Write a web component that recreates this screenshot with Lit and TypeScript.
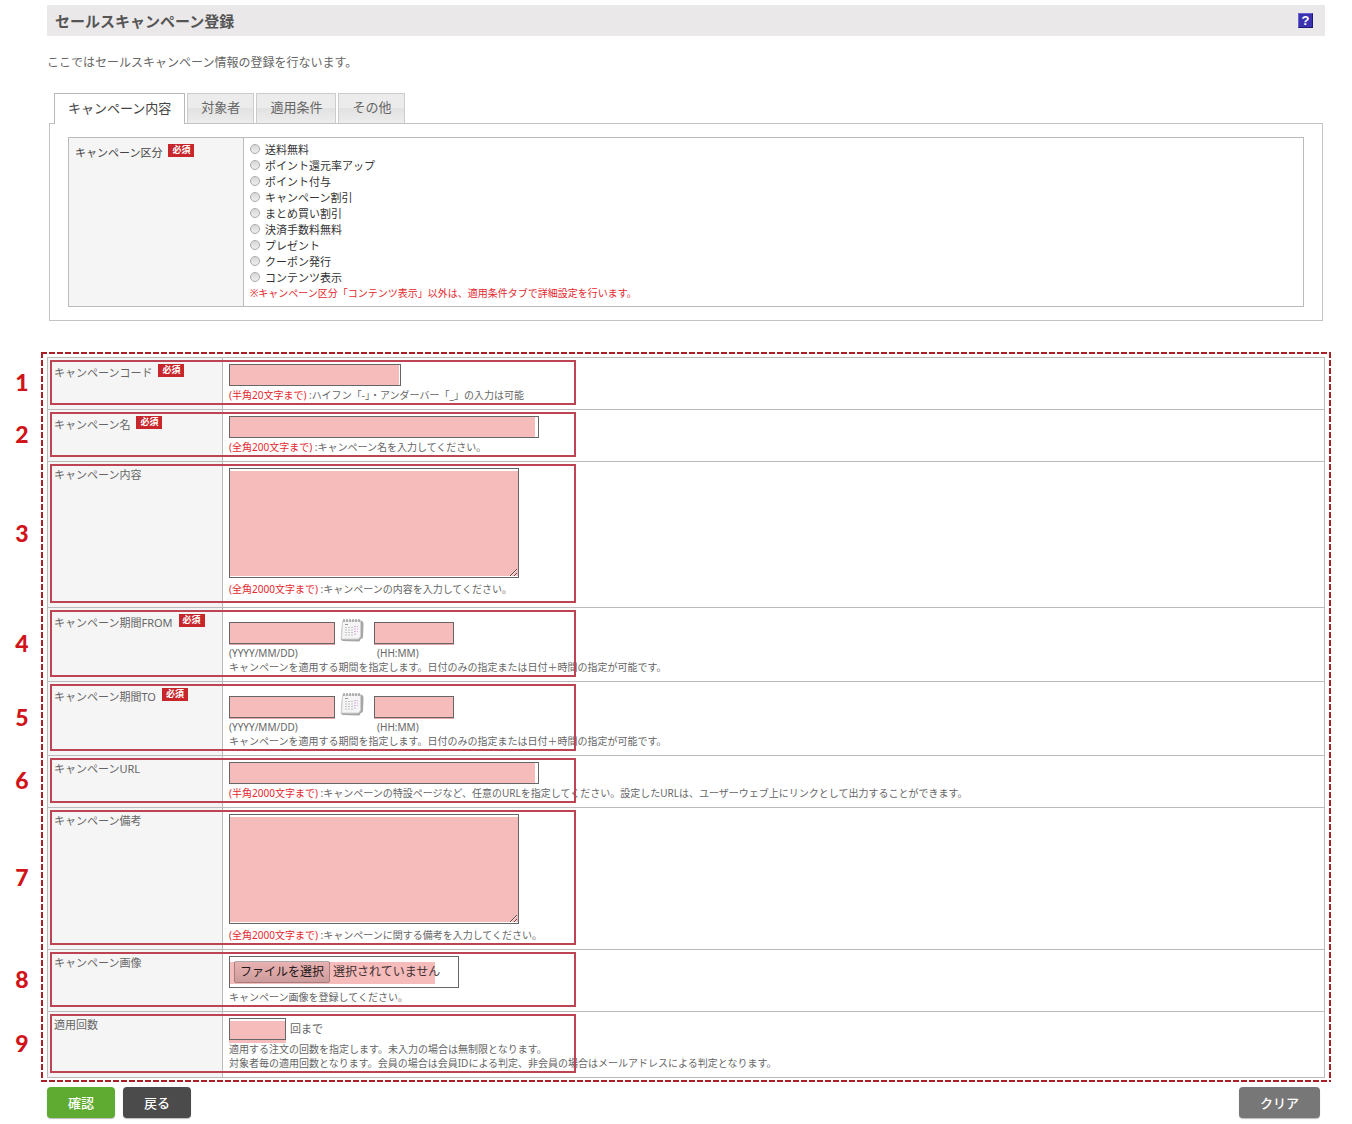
import { LitElement, html, css, svg, nothing, TemplateResult } from "lit";
import { customElement, state } from "lit/decorators.js";

const TABS = ["キャンペーン内容", "対象者", "適用条件", "その他"];

const KINDS = [
  "送料無料",
  "ポイント還元率アップ",
  "ポイント付与",
  "キャンペーン割引",
  "まとめ買い割引",
  "決済手数料無料",
  "プレゼント",
  "クーポン発行",
  "コンテンツ表示",
];

interface Row {
  label: string;
  forId: string;
  required?: boolean;
  roomy?: boolean;
  body: TemplateResult;
}

const hint = (limit: string, text: string) => html`
  <p class="hint"><span class="limit">(${limit}まで)</span> :${text}</p>
`;

const calendar = svg`
  <path d="M2.500 3 L21 2.500 Q23.500 3 23.500 6 L23 19 Q23 21 20.500 21 Q20.500 23.500 18 23.500 L3 23 Q0.500 22.500 0.800 19.500 Z" fill="#a6a6a6"/>
  <path d="M2.500 3 H20.500 V18.500 L18.500 21 H1.500 Z" fill="#f5f5f5" stroke="#d0d0d0"/>
  <path d="M4 1v3M7 1v3M10 1v3M13 1v3M16 1v3M19 1v3" stroke="#999" stroke-width="1.300"/>
  <path d="M5 6.500h3" stroke="#999"/>
  <path d="M5 9.500h9M5 12h9M5 14.500h9M5 17h9" stroke="#c2c2c8" stroke-dasharray="2 1"/>
  <path d="M14 8.500h4M14 11h4M14 13.500h4M14 16h3" stroke="#dcaee2" stroke-dasharray="2 1"/>
`;

const period = (id: string) => html`
  <div class="period">
    <div class="period-col period-date">
      <div class="line">
        <input class="field date" id=${id} type="text" />
        <button class="cal" type="button" aria-label="カレンダー">
          <svg viewBox="0 0 24 24" width="24" height="24" fill="none">${calendar}</svg>
        </button>
      </div>
      <label class="format" for=${id}>(YYYY/MM/DD)</label>
    </div>
    <div class="period-col">
      <div class="line"><input class="field time" id="${id}-time" type="text" /></div>
      <label class="format indent" for="${id}-time">(HH:MM)</label>
    </div>
  </div>
  <p class="hint flush">
    キャンペーンを適用する期間を指定します。日付のみの指定または日付＋時間の指定が可能です。
  </p>
`;

const ROWS: Row[] = [
  {
    label: "キャンペーンコード",
    forId: "code",
    required: true,
    body: html`<input class="field code" id="code" type="text" />
      ${hint("半角20文字", "ハイフン「-」・アンダーバー「_」の入力は可能")}`,
  },
  {
    label: "キャンペーン名",
    forId: "name",
    required: true,
    body: html`<input class="field wide" id="name" type="text" />
      ${hint("全角200文字", "キャンペーン名を入力してください。")}`,
  },
  {
    label: "キャンペーン内容",
    forId: "content",
    roomy: true,
    body: html`<textarea class="field area" id="content"></textarea>
      ${hint("全角2000文字", "キャンペーンの内容を入力してください。")}`,
  },
  { label: "キャンペーン期間FROM", forId: "from", required: true, body: period("from") },
  { label: "キャンペーン期間TO", forId: "to", required: true, body: period("to") },
  {
    label: "キャンペーンURL",
    forId: "url",
    body: html`<input class="field wide" id="url" type="text" />
      ${hint(
        "半角2000文字",
        "キャンペーンの特設ページなど、任意のURLを指定してください。設定したURLは、ユーザーウェブ上にリンクとして出力することができます。"
      )}`,
  },
  {
    label: "キャンペーン備考",
    forId: "memo",
    body: html`<textarea class="field area" id="memo"></textarea>
      ${hint("全角2000文字", "キャンペーンに関する備考を入力してください。")}`,
  },
  {
    label: "キャンペーン画像",
    forId: "image",
    body: html`<label class="file">
        <input class="file-input" id="image" type="file" />
        <span class="file-button">ファイルを選択</span>
        <span>選択されていません</span>
      </label>
      <p class="hint">キャンペーン画像を登録してください。</p>`,
  },
  {
    label: "適用回数",
    forId: "count",
    body: html`<div class="line">
        <input class="field count" id="count" type="text" /><span class="unit">回まで</span>
      </div>
      <p class="hint">
        適用する注文の回数を指定します。未入力の場合は無制限となります。<br />
        対象者毎の適用回数となります。会員の場合は会員IDによる判定、非会員の場合はメールアドレスによる判定となります。
      </p>`,
  },
];

@customElement("app-root")
export class AppRoot extends LitElement {
  @state() private tab = 0;

  static styles = css`
    :host {
      display: block;
      background: #fff;
      color: #666;
      font-family: "Noto Sans", "Noto Sans CJK JP", sans-serif;
      font-size: 11px;
      line-height: 14px;
    }
    * {
      box-sizing: border-box;
    }
    p,
    h1 {
      margin: 0;
    }
    .page {
      padding: 5px 21px 5px 41px;
    }
    .inset {
      margin: 0 6px;
    }
    .title-bar {
      display: flex;
      align-items: center;
      justify-content: space-between;
      height: 31px;
      padding: 0 12px 0 8px;
      background: #eae8e9;
    }
    h1 {
      font-size: 15px;
      line-height: 20px;
      font-weight: 700;
      color: #555;
    }
    .help {
      width: 15px;
      height: 15px;
      padding: 0;
      border: 1px solid;
      border-color: #6a62d0 #1f1a78 #1f1a78 #6a62d0;
      background: #3a32ae;
      color: #fff;
      font: 700 13px/13px "Liberation Sans", sans-serif;
    }
    .intro {
      margin-top: 18px;
      font-size: 12px;
      line-height: 18px;
    }
    .tabs {
      display: flex;
      gap: 2px;
      margin-top: 21px;
      padding-left: 7px;
    }
    .tab {
      height: 30px;
      padding: 0 13px 3px;
      border: 1px solid #ccc;
      border-bottom: 0;
      background: linear-gradient(#ececec 50%, #e2e2e2 50%, #ededed);
      color: #666;
      font: inherit;
      font-size: 13px;
    }
    .tab.active {
      height: 31px;
      margin-bottom: -1px;
      border-color: #b5b9b9;
      background: #fff;
      color: #444;
      z-index: 1;
    }
    .panel {
      margin: 0 8px;
      padding: 13px 18px;
      border: 1px solid #c0c4c4;
    }
    table {
      width: 100%;
      border: 1px solid #bbb;
      border-bottom: 0;
      border-spacing: 0;
    }
    th,
    td {
      padding: 6px 6px 7px;
      border-bottom: 1px solid #bbb;
      text-align: left;
      vertical-align: top;
      font-weight: 400;
    }
    th {
      width: 175px;
      border-right: 1px solid #bbb;
      background: #f5f5f5;
    }
    .kind-cell {
      padding-top: 4px;
      padding-bottom: 6px;
      color: #333;
    }
    .kind-head {
      color: #444;
    }
    .kind {
      display: flex;
      align-items: center;
      gap: 5px;
      height: 16px;
    }
    .kind input {
      appearance: none;
      width: 10px;
      height: 10px;
      margin: 0 0 2px;
      border: 1px solid #aaa;
      border-radius: 50%;
      background: linear-gradient(#d8d8d8, #eee);
    }
    .kind input:checked {
      background: radial-gradient(#444 35%, #eee 40%);
    }
    .note {
      font-size: 10px;
      color: #e5282e;
    }
    .head {
      display: flex;
      align-items: flex-start;
      gap: 6px;
      white-space: nowrap;
    }
    .required .head-text {
      margin-top: 2px;
    }
    .badge {
      width: 26px;
      height: 13px;
      background: #c7262b;
      color: #fff;
      font-size: 9px;
      line-height: 12px;
      font-weight: 700;
      text-align: center;
    }
    .marked {
      --dash: #a52027;
      margin-top: 31px;
      padding: 5px 6px 4px;
      background:
        repeating-linear-gradient(90deg, var(--dash) 0 6px, #fff 6px 8px) 0 0 / 100% 2px no-repeat,
        repeating-linear-gradient(90deg, var(--dash) 0 6px, #fff 6px 8px) 0 100% / 100% 2px no-repeat,
        repeating-linear-gradient(var(--dash) 0 6px, #fff 6px 8px) 0 0 / 2px 100% no-repeat,
        repeating-linear-gradient(var(--dash) 0 6px, #fff 6px 8px) 100% 0 / 2px 100% no-repeat;
    }
    .row {
      position: relative;
    }
    .roomy td {
      padding-bottom: 11px;
    }
    .frame {
      position: absolute;
      top: 2px;
      bottom: 5px;
      left: 2px;
      width: 526px;
      border: 2px solid #bd4452;
      pointer-events: none;
    }
    .number {
      position: absolute;
      top: 50%;
      left: -36px;
      width: 20px;
      margin-top: -14px;
      color: #d0141a;
      font: 900 23px/24px Lato, sans-serif;
      text-align: center;
    }
    .field {
      --tint: #f6bbbb;
      display: block;
      height: 22px;
      padding: 2px;
      border: 1px solid #666;
      border-radius: 0;
      background: linear-gradient(var(--tint), var(--tint)) 0 0 / 100% 100% no-repeat #fff;
      font: inherit;
    }
    .code {
      width: 172px;
      background-size: calc(100% - 1px) 100%;
    }
    .wide {
      width: 310px;
      background-size: calc(100% - 3px) 100%;
    }
    .area {
      width: 290px;
      height: 110px;
      margin-bottom: 4px;
      background-position: 0 2px;
      background-size: 100% calc(100% - 3px);
    }
    .date {
      width: 106px;
      box-shadow: 0 1px #e8a5a8;
    }
    .time {
      width: 80px;
      box-shadow: 0 1px #e8a5a8;
    }
    .count {
      width: 57px;
      background-position: 0 2px;
      box-shadow: 0 3px #f6bbbb;
    }
    .hint {
      margin-top: 2px;
      font-size: 10px;
      white-space: nowrap;
    }
    .hint.flush {
      margin-top: 0;
    }
    .limit {
      color: #e5282e;
    }
    .period {
      display: flex;
      padding-top: 4px;
    }
    .period-date {
      width: 145px;
    }
    .period-date .line {
      gap: 5px;
    }
    .period-col .line {
      height: 28px;
      align-items: flex-end;
      padding-bottom: 2px;
    }
    .line {
      display: flex;
      align-items: center;
    }
    .cal {
      width: 24px;
      height: 24px;
      margin-bottom: 2px;
      padding: 0;
      border: 0;
      background: none;
    }
    .format {
      display: block;
      font-size: 10px;
    }
    .indent {
      padding-left: 3px;
    }
    .unit {
      margin-left: 4px;
    }
    .file {
      position: relative;
      display: flex;
      align-items: center;
      gap: 3px;
      width: 230px;
      height: 32px;
      padding-left: 4px;
      border: 1px solid #666;
      color: #444;
      font-size: 12px;
      white-space: nowrap;
    }
    .file::after {
      content: "";
      position: absolute;
      left: 0;
      top: 5px;
      width: 205px;
      height: 22px;
      background: #f6bbbb;
      mix-blend-mode: multiply;
      pointer-events: none;
    }
    .file-input {
      position: absolute;
      inset: 0;
      opacity: 0;
    }
    .file-button {
      padding: 3px 5px;
      border: 1px solid #aaa;
      border-radius: 2px;
      background: linear-gradient(#f2f2f2, #d4d4d4);
      color: #222;
    }
    .actions {
      display: flex;
      gap: 8px;
      margin-top: 5px;
      padding: 0 11px 0 6px;
    }
    .action {
      min-width: 68px;
      height: 31px;
      padding: 0 21px;
      border: 0;
      border-radius: 4px;
      box-shadow: 0 1px 1px #bbb;
      background: #4b4b4b;
      color: #fff;
      font: inherit;
      font-size: 13px;
      font-weight: 500;
    }
    .confirm {
      background: #5fab31;
    }
    .clear {
      margin-left: auto;
      background: #777;
    }
  `;

  private head(label: string, required: boolean, forId?: string) {
    return html`<div class="head ${required ? "required" : ""}">
      ${forId
        ? html`<label class="head-text" for=${forId}>${label}</label>`
        : html`<span class="head-text">${label}</span>`}
      ${required ? html`<span class="badge">必須</span>` : nothing}
    </div>`;
  }

  render() {
    return html`
      <main class="page">
        <header class="title-bar inset">
          <h1>セールスキャンペーン登録</h1>
          <button class="help" type="button">?</button>
        </header>
        <div class="inset">
          <p class="intro">ここではセールスキャンペーン情報の登録を行ないます。</p>
          <nav class="tabs" role="tablist">
            ${TABS.map(
              (name, i) => html`<button
                class="tab ${i === this.tab ? "active" : ""}"
                type="button"
                role="tab"
                aria-selected=${i === this.tab}
                @click=${() => (this.tab = i)}
              >${name}</button>`
            )}
          </nav>
        </div>
        <section class="panel">
          <table>
            <tr>
              <th class="kind-head" scope="row">${this.head("キャンペーン区分", true)}</th>
              <td class="kind-cell">
                ${KINDS.map(
                  (kind) => html`<label class="kind"><input type="radio" name="kind" />${kind}</label>`
                )}
                <p class="note">
                  ※キャンペーン区分「コンテンツ表示」以外は、適用条件タブで詳細設定を行います。
                </p>
              </td>
            </tr>
          </table>
        </section>

        <section class="marked">
          <table>
            ${ROWS.map(
              (row, i) => html`<tr class="row ${row.roomy ? "roomy" : ""}">
                <th scope="row">
                  ${this.head(row.label, !!row.required, row.forId)}
                  <span class="number">${i + 1}</span>
                  <span class="frame"></span>
                </th>
                <td>${row.body}</td>
              </tr>`
            )}
          </table>
        </section>

        <footer class="actions">
          <button class="action confirm" type="button">確認</button>
          <button class="action" type="button">戻る</button>
          <button class="action clear" type="button">クリア</button>
        </footer>
      </main>
    `;
  }
}
